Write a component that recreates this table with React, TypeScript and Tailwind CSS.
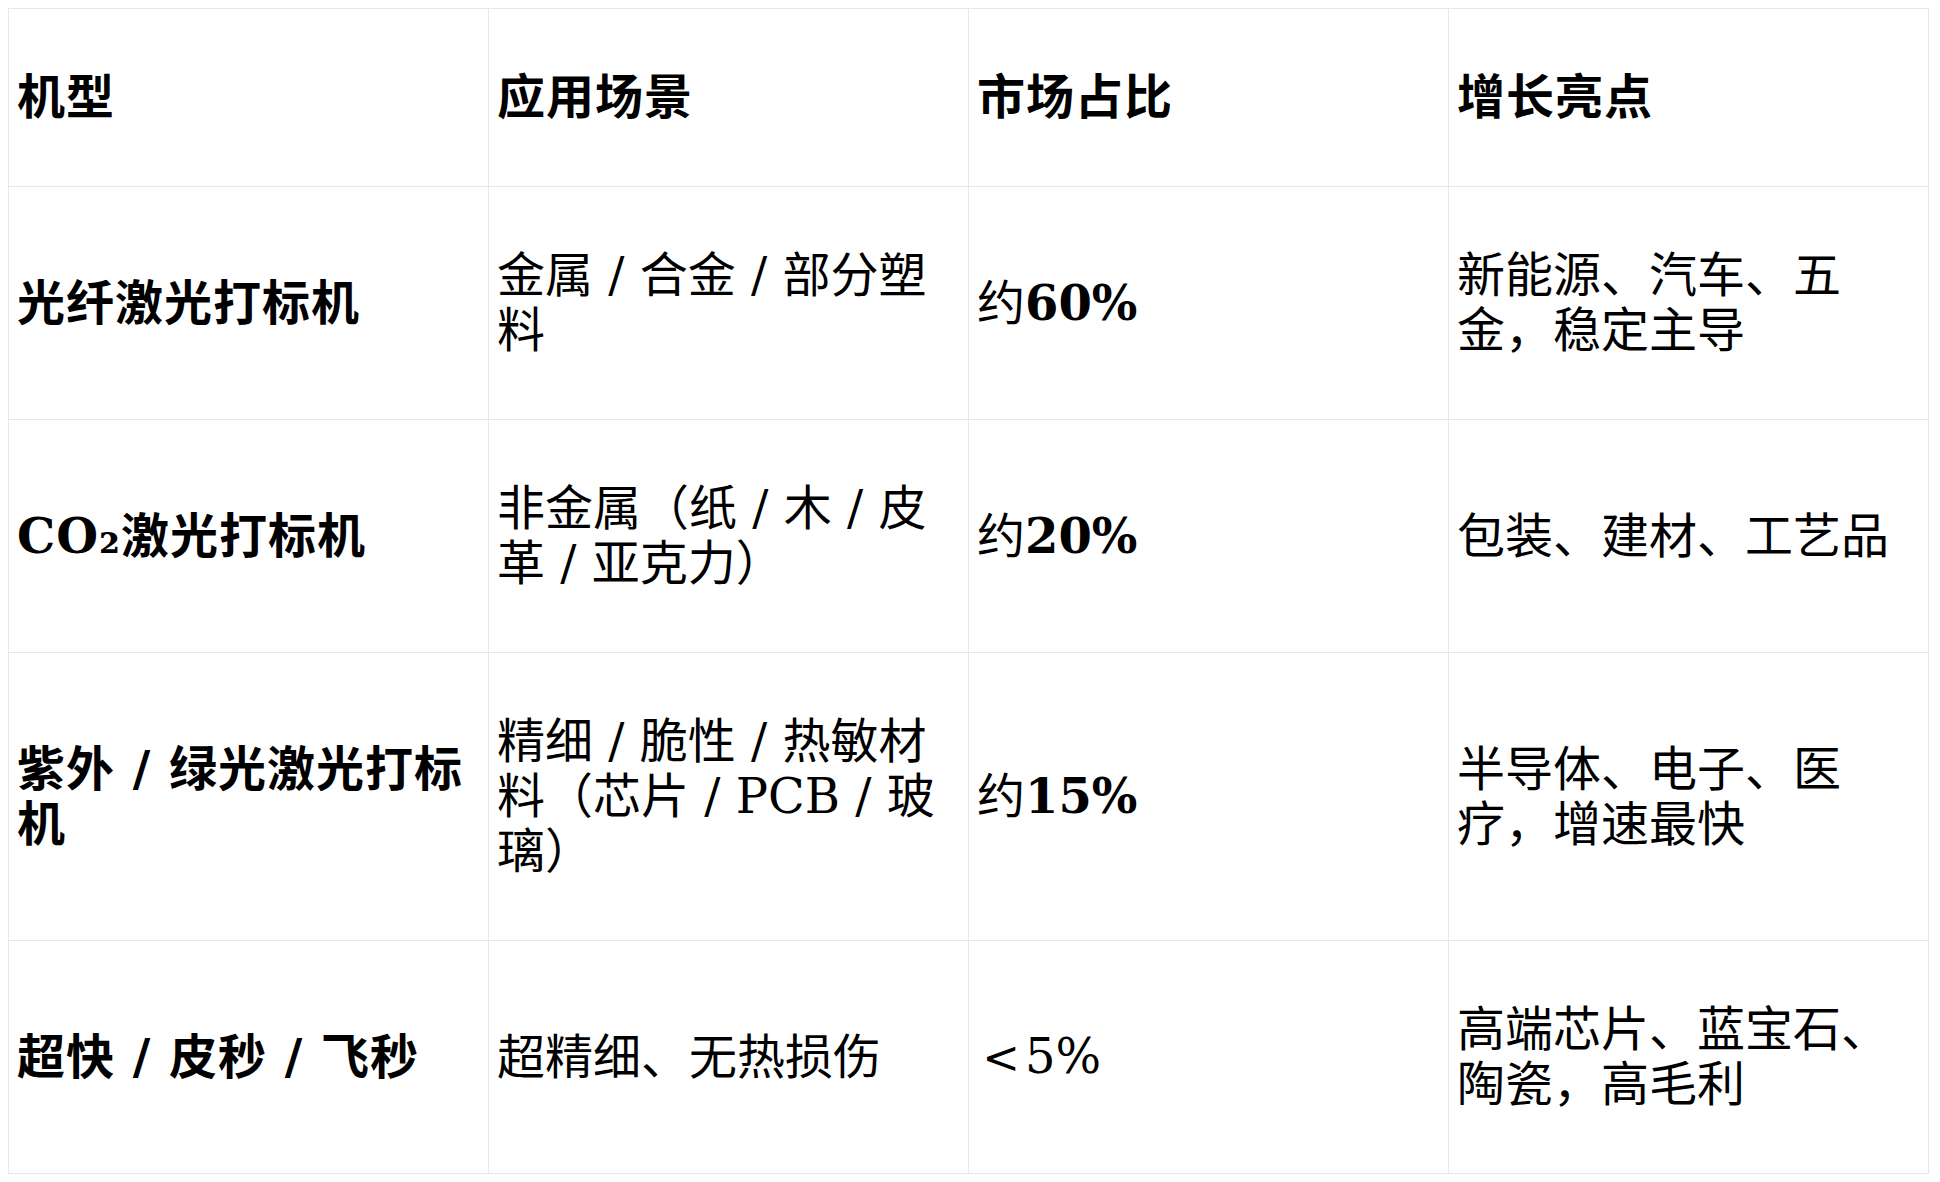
const rows: { model: string; scene: string; share: { pre?: string; value: string; lt?: boolean }; highlight: string }[] = [
  {
    model: "光纤激光打标机",
    scene: "金属 / 合金 / 部分塑料",
    share: { pre: "约", value: "60%" },
    highlight: "新能源、汽车、五金，稳定主导",
  },
  {
    model: "CO₂激光打标机",
    scene: "非金属（纸 / 木 / 皮革 / 亚克力）",
    share: { pre: "约", value: "20%" },
    highlight: "包装、建材、工艺品",
  },
  {
    model: "紫外 / 绿光激光打标机",
    scene: "精细 / 脆性 / 热敏材料（芯片 / PCB / 玻璃）",
    share: { pre: "约", value: "15%" },
    highlight: "半导体、电子、医疗，增速最快",
  },
  {
    model: "超快 / 皮秒 / 飞秒",
    scene: "超精细、无热损伤",
    share: { value: "5%", lt: true },
    highlight: "高端芯片、蓝宝石、陶瓷，高毛利",
  },
];

const cell = "border border-[#e5e7eb] px-2 py-[61px] align-middle text-left";
const strong = "font-bold tracking-[1px]";

export default function App() {
  return (
    <div className="bg-white p-2 text-black font-['DejaVu_Serif','Noto_Sans_CJK_SC',serif] text-[48px] leading-[55px]">
      <table className="w-[1921px] table-fixed border-collapse">
        <thead>
          <tr>
            <th className={`${cell} ${strong}`}>机型</th>
            <th className={`${cell} ${strong}`}>应用场景</th>
            <th className={`${cell} ${strong}`}>市场占比</th>
            <th className={`${cell} ${strong}`}>增长亮点</th>
          </tr>
        </thead>
        <tbody>
          {rows.map((r) => (
            <tr key={r.model}>
              <td className={`${cell} ${strong}`}>{r.model}</td>
              <td className={cell}>{r.scene}</td>
              <td className={cell}>
                {r.share.lt ? (
                  <>
                    <span className="inline-block w-[48px] text-center text-[45px]">&lt;</span>
                    {r.share.value}
                  </>
                ) : (
                  <>
                    {r.share.pre}
                    <span className="font-bold">{r.share.value}</span>
                  </>
                )}
              </td>
              <td className={cell}>{r.highlight}</td>
            </tr>
          ))}
        </tbody>
      </table>
    </div>
  );
}
